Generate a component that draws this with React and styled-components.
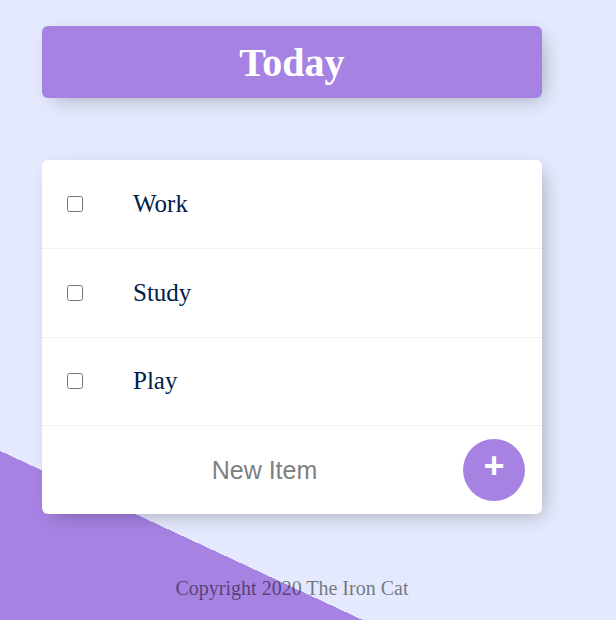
import React from 'react'
import styled, { createGlobalStyle } from 'styled-components'

const GlobalStyle = createGlobalStyle`
  html {
    background-color: #E4E9FD;
    background-image: linear-gradient(25deg, #A683E3 50%, #E4E9FD 50%);
    background-repeat: no-repeat;
    background-size: 616px 1189px;
    min-height: 620px;
  }
  body {
    margin: 0;
    overflow: hidden;
    font-family: "Liberation Serif", "Times New Roman", serif;
  }
`

const Page = styled.div`
  display: flex;
  flex-direction: column;
  width: 500px;
  padding: 26px 0 0 42px;
`

const Box = styled.div`
  background: #fff;
  border-radius: 6px;
  box-shadow: 6px 6px 19px -6px rgba(0, 0, 0, 0.3);
`

const Heading = styled(Box)`
  background-color: #A683E3;
  text-align: center;
  h1 {
    margin: 0;
    padding: 12.5px;
    color: #fff;
    font-size: 40px;
    line-height: 47px;
    font-weight: 700;
  }
`

const List = styled(Box)`
  margin-top: 62px;
`

const Item = styled.div`
  min-height: 87.8px;
  display: flex;
  align-items: center;
  border-bottom: 1px solid #F1F1F1;
  &:last-child {
    border-bottom: 0;
  }
`

const Check = styled.input`
  width: 16px;
  height: 16px;
  margin: 25px;
`

const Label = styled.p`
  margin: 0;
  padding: 25px;
  font-size: 25px;
  color: #00204a;
`

const Form = styled.form`
  display: flex;
  align-items: center;
  gap: 1px;
  margin-left: 25px;
`

const TextInput = styled.input`
  text-align: center;
  height: 75px;
  width: 395px;
  padding: 0;
  border: none;
  background: transparent;
  font-family: "Liberation Sans", Arial, sans-serif;
  font-size: 25px;
  &::placeholder {
    color: grey;
    opacity: 1;
  }
  &:focus {
    outline: none;
  }
`

const AddButton = styled.button`
  height: 62px;
  width: 62px;
  border-radius: 50%;
  border: 0;
  background-color: #A683E3;
  color: #fff;
  font-family: "Liberation Sans", Arial, sans-serif;
  font-size: 36px;
  font-weight: 700;
  line-height: 1;
  padding: 0 0 8px;
`

const Footer = styled.footer`
  margin-top: 63px;
  text-align: center;
  font-size: 20px;
  color: rgba(0, 0, 0, 0.5);
`

const items = ['Work', 'Study', 'Play']

export default function App() {
  return (
    <>
      <GlobalStyle />
      <Page>
        <Heading>
          <h1>Today</h1>
        </Heading>
        <List>
          {items.map((item) => (
            <Item key={item}>
              <Check type="checkbox" />
              <Label>{item}</Label>
            </Item>
          ))}
          <Item>
            <Form onSubmit={(e) => e.preventDefault()}>
              <TextInput type="text" placeholder="New Item" autoComplete="off" />
              <AddButton type="submit">+</AddButton>
            </Form>
          </Item>
        </List>
        <Footer>Copyright 2020 The Iron Cat</Footer>
      </Page>
    </>
  )
}
